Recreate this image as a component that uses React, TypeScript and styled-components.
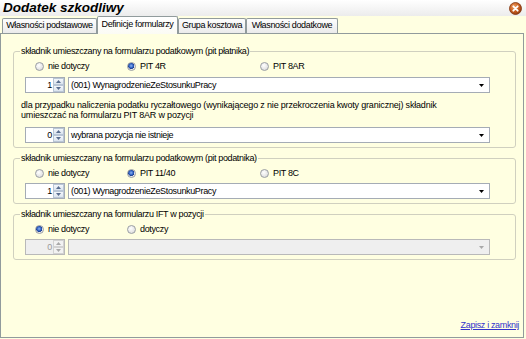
import React from 'react';
import styled, { createGlobalStyle } from 'styled-components';

const GlobalStyle = createGlobalStyle`
  html, body {
    margin: 0;
    padding: 0;
    background: #ffffe1;
  }
`;

const Window = styled.div`
  width: 526px;
  height: 339px;
  display: flex;
  flex-direction: column;
  overflow: hidden;
  background: #ffffe1;
  font-family: "Liberation Sans", Arial, sans-serif;
  font-size: 9px;
  letter-spacing: -0.35px;
  color: #000;
`;

const TitleBar = styled.div`
  flex: none;
  height: 16px;
  display: flex;
  align-items: center;
  justify-content: space-between;
  padding: 0 4px 0 3px;
  background: linear-gradient(#ffffff, #ececec);
`;

const Title = styled.h1`
  margin: 0;
  font-size: 13.5px;
  line-height: 16px;
  font-weight: bold;
  font-style: italic;
  letter-spacing: 0;
`;

const Client = styled.div`
  flex: 1;
  min-height: 0;
  display: flex;
  flex-direction: column;
  padding: 0 2px 1px 0;
`;

const TabStrip = styled.div`
  flex: none;
  height: 17px;
  display: flex;
  align-items: flex-end;
  padding-left: 2px;
`;

const Tab = styled.div<{ $active?: boolean; $width: number }>`
  position: relative;
  z-index: ${p => (p.$active ? 1 : 0)};
  box-sizing: border-box;
  width: ${p => p.$width}px;
  height: ${p => (p.$active ? 18 : 15)}px;
  margin-bottom: ${p => (p.$active ? -1 : 0)}px;
  padding-top: ${p => (p.$active ? 1 : 0)}px;
  border: 1px solid #919b9c;
  border-bottom: none;
  border-radius: 2px 2px 0 0;
  background: ${p =>
    p.$active ? 'linear-gradient(#ffffff, #fbfbf4)' : 'linear-gradient(#fdfdfd, #ebebeb)'};
  text-align: center;
  line-height: 13px;
  white-space: nowrap;
`;

const Panel = styled.div`
  flex: 1;
  min-height: 0;
  display: flex;
  flex-direction: column;
  border: 1px solid #919b9c;
  background: #ffffe1;
  padding: 11px 7px 6px 12px;
`;

const Group = styled.fieldset<{ $first?: boolean }>`
  margin: ${p => (p.$first ? 0 : 4)}px 0 0 0;
  min-width: 0;
  padding: 0 25px 4px 7px;
  border: 1px solid #d0d0bf;
  border-radius: 3px;
`;

const Legend = styled.legend`
  padding: 0 1px;
  margin-left: -1px;
  line-height: 12px;
`;

const RadioRow = styled.div`
  height: 12px;
  margin-top: 3px;
  padding-left: 14px;
  display: flex;
  align-items: center;
`;

const RadioOption = styled.label<{ $width?: number }>`
  display: flex;
  align-items: center;
  gap: 4px;
  width: ${p => (p.$width ? `${p.$width}px` : 'auto')};
  line-height: 12px;
`;

const RadioCircle = styled.span<{ $checked?: boolean }>`
  box-sizing: border-box;
  width: 9px;
  height: 9px;
  border-radius: 50%;
  border: 1px solid #9a9ea4;
  background: ${p =>
    p.$checked
      ? 'radial-gradient(circle at 45% 40%, #8fb4f0 0, #2a5cc0 38%, #1c3f8c 52%, #e8e8e8 58%, #f6f6f6 100%)'
      : 'radial-gradient(circle at 40% 35%, #ffffff 0, #e6e6e6 60%, #cfcfcf 100%)'};
`;

const SpinRow = styled.div<{ $gap: number }>`
  margin: ${p => p.$gap}px 0 0 4px;
  display: flex;
  gap: 3px;
`;

const Spin = styled.div<{ $disabled?: boolean }>`
  flex: none;
  box-sizing: border-box;
  width: 40px;
  height: 16px;
  display: flex;
  border: 1px solid ${p => (p.$disabled ? '#b9b9b9' : '#a5acb5')};
  background: ${p => (p.$disabled ? '#efefef' : '#ffffff')};
`;

const SpinValue = styled.span<{ $disabled?: boolean }>`
  flex: 1;
  text-align: right;
  line-height: 14px;
  padding-right: 1px;
  color: ${p => (p.$disabled ? '#9a9a9a' : '#000')};
`;

const SpinButtons = styled.div`
  width: 11px;
  display: flex;
  flex-direction: column;
`;

const SpinButton = styled.div<{ $disabled?: boolean }>`
  flex: 1;
  display: flex;
  align-items: center;
  justify-content: center;
  box-sizing: border-box;
  border: 1px solid ${p => (p.$disabled ? '#d2d2d2' : '#b9c6d6')};
  background: ${p =>
    p.$disabled ? '#f2f2f2' : 'linear-gradient(#f4f7fb, #dbe4ee)'};
`;

const Combo = styled.div<{ $disabled?: boolean }>`
  flex: 1;
  box-sizing: border-box;
  height: 16px;
  display: flex;
  align-items: center;
  border: 1px solid ${p => (p.$disabled ? '#b9b9b9' : '#a5acb5')};
  background: ${p => (p.$disabled ? '#efefef' : '#ffffff')};
`;

const ComboText = styled.span`
  flex: 1;
  padding-left: 2px;
  line-height: 14px;
  white-space: nowrap;
`;

const ComboArrow = styled.span`
  width: 15px;
  display: flex;
  align-items: center;
  justify-content: center;
`;

const Note = styled.p`
  margin: 7px 0 0 0;
  line-height: 10px;
  letter-spacing: -0.18px;
  white-space: nowrap;
`;

const Spacer = styled.div`
  flex: 1;
`;

const SaveLink = styled.a`
  align-self: flex-end;
  margin-right: -3px;
  line-height: 12px;
  color: #3333cc;
  text-decoration: underline;
  cursor: pointer;
`;

const CloseIcon = () => (
  <svg width="13" height="13" viewBox="0 0 13 13">
    <defs>
      <radialGradient id="closeGrad" cx="40%" cy="35%" r="70%">
        <stop offset="0" stopColor="#f2a264" />
        <stop offset="0.6" stopColor="#c35a1e" />
        <stop offset="1" stopColor="#8e3a10" />
      </radialGradient>
    </defs>
    <circle cx="6.5" cy="6.5" r="6" fill="url(#closeGrad)" stroke="#7e3410" strokeWidth="0.8" />
    <path d="M4.3 4.3 L8.7 8.7 M8.7 4.3 L4.3 8.7" stroke="#fff" strokeWidth="1.8" strokeLinecap="round" />
  </svg>
);

const Triangle = ({ dir, color }: { dir: 'up' | 'down'; color: string }) => (
  <svg width="5" height="3" viewBox="0 0 5 3">
    <path d={dir === 'up' ? 'M0 3 L2.5 0 L5 3 Z' : 'M0 0 L5 0 L2.5 3 Z'} fill={color} />
  </svg>
);

type SpinComboProps = {
  value: number;
  text: string;
  disabled?: boolean;
  gap?: number;
};

const SpinCombo = ({ value, text, disabled, gap = 4 }: SpinComboProps) => {
  const arrow = disabled ? '#a8a8a8' : '#5a6e90';
  return (
    <SpinRow $gap={gap}>
      <Spin $disabled={disabled}>
        <SpinValue $disabled={disabled}>{value}</SpinValue>
        <SpinButtons>
          <SpinButton $disabled={disabled}>
            <Triangle dir="up" color={arrow} />
          </SpinButton>
          <SpinButton $disabled={disabled}>
            <Triangle dir="down" color={arrow} />
          </SpinButton>
        </SpinButtons>
      </Spin>
      <Combo $disabled={disabled}>
        <ComboText>{text}</ComboText>
        <ComboArrow>
          <Triangle dir="down" color={disabled ? '#a8a8a8' : '#000'} />
        </ComboArrow>
      </Combo>
    </SpinRow>
  );
};

type RadioItem = { label: string; checked?: boolean; width?: number };

const Radios = ({ items }: { items: RadioItem[] }) => (
  <RadioRow>
    {items.map(item => (
      <RadioOption key={item.label} $width={item.width}>
        <RadioCircle $checked={item.checked} />
        {item.label}
      </RadioOption>
    ))}
  </RadioRow>
);

const tabs = [
  { label: 'Własności podstawowe', width: 95 },
  { label: 'Definicje formularzy', width: 81, active: true },
  { label: 'Grupa kosztowa', width: 68 },
  { label: 'Własności dodatkowe', width: 92 },
];

export default function App() {
  return (
    <Window>
      <GlobalStyle />
      <TitleBar>
        <Title>Dodatek szkodliwy</Title>
        <CloseIcon />
      </TitleBar>
      <Client>
        <TabStrip>
          {tabs.map(t => (
            <Tab key={t.label} $width={t.width} $active={t.active}>
              {t.label}
            </Tab>
          ))}
        </TabStrip>
        <Panel>
          <Group $first>
            <Legend>składnik umieszczany na formularzu podatkowym (pit płatnika)</Legend>
            <Radios
              items={[
                { label: 'nie dotyczy', width: 92 },
                { label: 'PIT 4R', checked: true, width: 133 },
                { label: 'PIT 8AR' },
              ]}
            />
            <SpinCombo value={1} text="(001) WynagrodzenieZeStosunkuPracy" gap={5} />
            <Note>
              dla przypadku naliczenia podatku ryczałtowego (wynikającego z nie przekroczenia kwoty granicznej) składnik
              <br />
              umieszczać na formularzu PIT 8AR w pozycji
            </Note>
            <SpinCombo value={0} text="wybrana pozycja nie istnieje" gap={7} />
          </Group>
          <Group>
            <Legend>składnik umieszczany na formularzu podatkowym (pit podatnika)</Legend>
            <Radios
              items={[
                { label: 'nie dotyczy', width: 92 },
                { label: 'PIT 11/40', checked: true, width: 133 },
                { label: 'PIT 8C' },
              ]}
            />
            <SpinCombo value={1} text="(001) WynagrodzenieZeStosunkuPracy" />
          </Group>
          <Group>
            <Legend>składnik umieszczany na formularzu IFT w pozycji</Legend>
            <Radios
              items={[
                { label: 'nie dotyczy', checked: true, width: 92 },
                { label: 'dotyczy' },
              ]}
            />
            <SpinCombo value={0} text="" disabled />
          </Group>
          <Spacer />
          <SaveLink>Zapisz i zamknij</SaveLink>
        </Panel>
      </Client>
    </Window>
  );
}
